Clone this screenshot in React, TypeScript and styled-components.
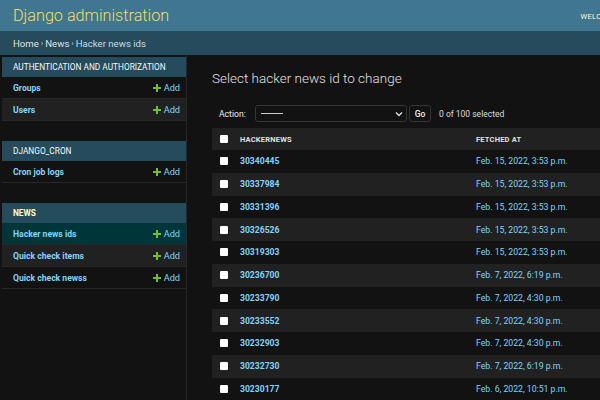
import React from 'react';
import styled, { createGlobalStyle } from 'styled-components';

const colors = {
  header: '#417690',
  primary: '#264b5d',
  body: '#121212',
  darkened: '#212121',
  selectedRow: '#00363a',
  hairline: '#272727',
  border: '#353535',
  link: '#81d4fa',
  branding: '#f5dd5d',
  text: '#eeeeee',
};

const GlobalStyle = createGlobalStyle`
  html, body {
    margin: 0;
    padding: 0;
    background-color: ${colors.body};
    font-family: Roboto, "Liberation Sans", Arial, sans-serif;
    color: ${colors.text};
    overflow: hidden;
  }
`;

const Header = styled.div`
  height: 31px;
  background-color: ${colors.header};
  display: flex;
  align-items: center;
  justify-content: space-between;
  padding: 0 0 0 13px;
  overflow: hidden;
`;

const Branding = styled.div`
  color: ${colors.branding};
  font-size: 16.2px;
  font-weight: 300;
  margin-top: -1px;
`;

const UserTools = styled.div`
  font-size: 7.5px;
  color: #ffffcc;
  letter-spacing: 0.3px;
  white-space: nowrap;
  margin-right: -20px;
  margin-top: 1px;
`;

const Breadcrumbs = styled.div`
  height: 24px;
  background-color: ${colors.primary};
  display: flex;
  align-items: center;
  padding: 0 13px;
  font-size: 9.6px;
  color: #c4dce8;
  gap: 2px;
`;

const Crumb = styled.span`
  color: #e0e0e0;
`;

const Sep = styled.span`
  font-size: 8px;
`;

const Main = styled.div`
  display: flex;
  height: 345px;
`;

const Sidebar = styled.div`
  width: 184px;
  flex-shrink: 0;
  padding: 2px 0 0 2px;
  border-right: 1px solid ${colors.hairline};
`;

const Module = styled.div`
  margin-bottom: 20px;
`;

const Caption = styled.div<{ $current?: boolean }>`
  height: 20px;
  background-color: ${colors.primary};
  display: flex;
  align-items: center;
  padding: 0 11px;
  font-size: 8.3px;
  white-space: nowrap;
  text-transform: uppercase;
  font-weight: ${(p) => (p.$current ? 700 : 400)};
  color: ${(p) => (p.$current ? '#ffffcc' : '#f7f7f7')};
`;

const NavRow = styled.div<{ $bg: string }>`
  height: 21px;
  border-bottom: 1px solid ${colors.hairline};
  background-color: ${(p) => p.$bg};
  display: flex;
  align-items: center;
  justify-content: space-between;
  padding: 0 6px 0 11px;
  font-size: 8.6px;
`;

const NavLink = styled.span`
  color: ${colors.link};
  font-weight: 700;
`;

const AddLink = styled.span`
  color: ${colors.link};
  display: flex;
  align-items: center;
  gap: 3px;
  font-size: 9.2px;
`;

const Content = styled.div`
  flex: 1;
  padding: 13px 0 0 25px;
  overflow: hidden;
`;

const Title = styled.h1`
  margin: 0;
  font-size: 13.5px;
  font-weight: 300;
  color: #e0e0e0;
  height: 20px;
  line-height: 20px;
`;

const Actions = styled.div`
  display: flex;
  align-items: center;
  margin-top: 17px;
  padding-left: 7px;
  font-size: 8.6px;
  color: #eeeeee;
  height: 17px;
`;

const ActionLabel = styled.span`
  width: 36px;
`;

const Select = styled.div`
  width: 142px;
  height: 15px;
  border: 1px solid ${colors.border};
  border-radius: 3px;
  display: flex;
  align-items: center;
  justify-content: space-between;
  padding: 0 3px 0 5px;
  box-sizing: content-box;
`;

const Dashes = styled.div`
  width: 22px;
  height: 1px;
  background-color: #cccccc;
`;

const GoButton = styled.div`
  margin-left: 2px;
  width: 20px;
  height: 15px;
  border: 1px solid ${colors.border};
  border-radius: 3px;
  display: flex;
  align-items: center;
  justify-content: center;
  font-size: 8.5px;
  font-weight: 500;
`;

const Counter = styled.span`
  margin-left: 8px;
  font-size: 8.5px;
  color: #dddddd;
`;

const Table = styled.div`
  margin-top: 6px;
  width: 420px;
`;

const HeadRow = styled.div`
  height: 22px;
  background-color: ${colors.darkened};
  display: grid;
  grid-template-columns: 28px 236px 1fr;
  align-items: center;
  font-size: 7.5px;
  font-weight: 700;
  color: #e0e0e0;
  letter-spacing: 0.2px;
`;

const Row = styled.div<{ $even: boolean }>`
  height: 22.75px;
  background-color: ${(p) => (p.$even ? colors.darkened : colors.body)};
  display: grid;
  grid-template-columns: 28px 236px 1fr;
  align-items: center;
`;

const CheckCell = styled.div`
  display: flex;
  padding-left: 8px;
`;

const Checkbox = styled.div`
  width: 8px;
  height: 8px;
  background-color: #ffffff;
  border-radius: 1px;
`;

const IdLink = styled.span`
  color: ${colors.link};
  font-weight: 700;
  font-size: 8.6px;
`;

const DateText = styled.span`
  color: ${colors.link};
  font-size: 8.7px;
`;

const Plus = () => (
  <svg width="8" height="8" viewBox="0 0 8 8">
    <rect x="3" y="0" width="2" height="8" fill="#70bf2b" />
    <rect x="0" y="3" width="8" height="2" fill="#70bf2b" />
  </svg>
);

const Chevron = () => (
  <svg width="8" height="6" viewBox="0 0 8 6">
    <path d="M1 1.5 L4 4.5 L7 1.5" stroke="#dddddd" strokeWidth="1.4" fill="none" />
  </svg>
);

const modules = [
  { name: 'Authentication and Authorization', current: false, models: ['Groups', 'Users'] },
  { name: 'Django_cron', current: false, models: ['Cron job logs'] },
  { name: 'News', current: true, models: ['Hacker news ids', 'Quick check items', 'Quick check newss'] },
];

const rows = [
  ['30340445', 'Feb. 15, 2022, 3:53 p.m.'],
  ['30337984', 'Feb. 15, 2022, 3:53 p.m.'],
  ['30331396', 'Feb. 15, 2022, 3:53 p.m.'],
  ['30326526', 'Feb. 15, 2022, 3:53 p.m.'],
  ['30319303', 'Feb. 15, 2022, 3:53 p.m.'],
  ['30236700', 'Feb. 7, 2022, 6:19 p.m.'],
  ['30233790', 'Feb. 7, 2022, 4:30 p.m.'],
  ['30233552', 'Feb. 7, 2022, 4:30 p.m.'],
  ['30232903', 'Feb. 7, 2022, 4:30 p.m.'],
  ['30232730', 'Feb. 7, 2022, 6:19 p.m.'],
  ['30230177', 'Feb. 6, 2022, 10:51 p.m.'],
];

function App() {
  return (
    <>
      <GlobalStyle />
      <Header>
        <Branding>Django administration</Branding>
        <UserTools>WELCOME,</UserTools>
      </Header>
      <Breadcrumbs>
        <Crumb>Home</Crumb>
        <Sep>›</Sep>
        <Crumb>News</Crumb>
        <Sep>›</Sep>
        <span>Hacker news ids</span>
      </Breadcrumbs>
      <Main>
        <Sidebar>
          {modules.map((m) => (
            <Module key={m.name}>
              <Caption $current={m.current}>{m.name}</Caption>
              {m.models.map((model, i) => {
                let bg = i % 2 === 1 ? colors.darkened : colors.body;
                if (model === 'Hacker news ids') bg = colors.selectedRow;
                return (
                  <NavRow key={model} $bg={bg}>
                    <NavLink>{model}</NavLink>
                    <AddLink>
                      <Plus />
                      Add
                    </AddLink>
                  </NavRow>
                );
              })}
            </Module>
          ))}
        </Sidebar>
        <Content>
          <Title>Select hacker news id to change</Title>
          <Actions>
            <ActionLabel>Action:</ActionLabel>
            <Select>
              <Dashes />
              <Chevron />
            </Select>
            <GoButton>Go</GoButton>
            <Counter>0 of 100 selected</Counter>
          </Actions>
          <Table>
            <HeadRow>
              <CheckCell>
                <Checkbox />
              </CheckCell>
              <span>HACKERNEWS</span>
              <span>FETCHED AT</span>
            </HeadRow>
            {rows.map(([id, date], i) => (
              <Row key={id} $even={i % 2 === 1}>
                <CheckCell>
                  <Checkbox />
                </CheckCell>
                <IdLink>{id}</IdLink>
                <DateText>{date}</DateText>
              </Row>
            ))}
          </Table>
        </Content>
      </Main>
    </>
  );
}

export default App;
